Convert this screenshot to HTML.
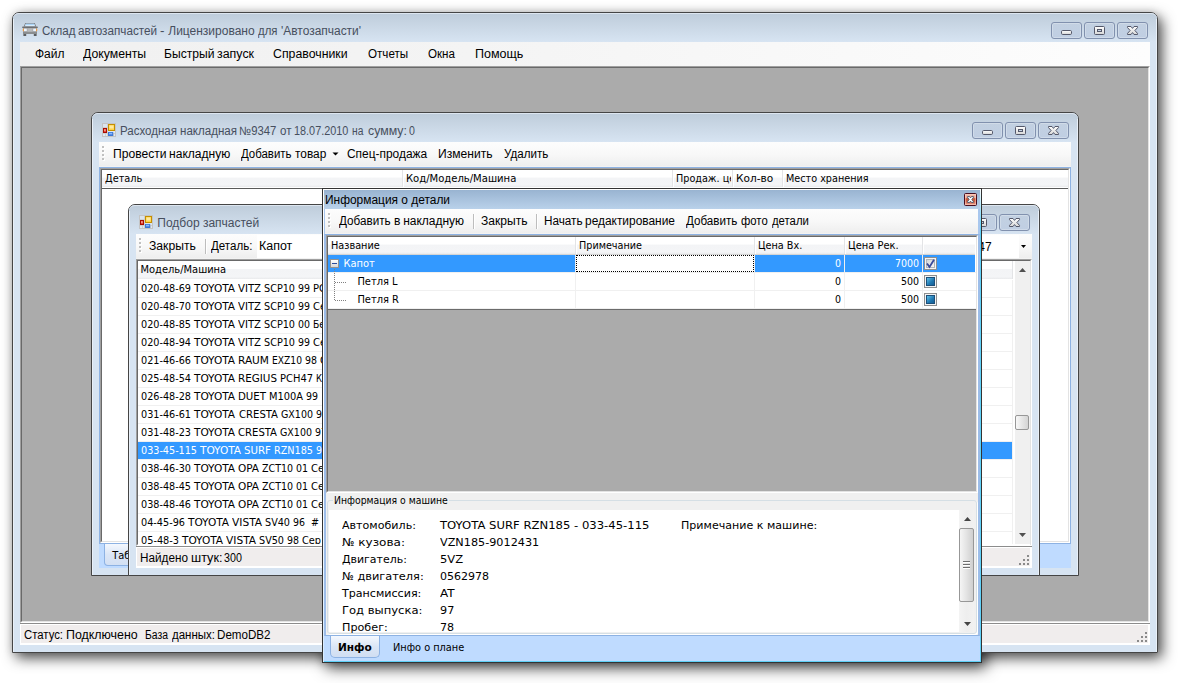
<!DOCTYPE html>
<html lang="ru"><head><meta charset="utf-8"><title>Склад автозапчастей</title>
<style>
html,body{margin:0;padding:0}
body{width:1178px;height:683px;background:#fff;position:relative;overflow:hidden}
div,span,svg{position:absolute;box-sizing:border-box}
span{white-space:pre;line-height:20px;height:20px}
</style></head>
<body>
<svg width="0" height="0" style="left:0;top:0"><defs><linearGradient id="gg" x1="0" y1="0" x2="0" y2="1"><stop offset="0" stop-color="#ffffff"/><stop offset="1" stop-color="#d6d6d6"/></linearGradient></defs></svg>
<div style="left:12px;top:12px;width:1146px;height:641px;border-radius:7px 7px 0 0;box-shadow:4px 5px 14px 0 rgba(0,0,0,.7), 0 0 8px rgba(0,0,0,.1);background:#fff;"></div>
<div style="left:322px;top:188px;width:660px;height:475px;box-shadow:4px 5px 14px 0 rgba(0,0,0,.7), 0 0 8px rgba(0,0,0,.1);background:#fff;"></div>
<div style="left:12px;top:12px;width:1146px;height:641px;background:#d7e4f2;border:1px solid #454545;border-radius:7px 7px 0 0;"></div>
<div style="left:13px;top:13px;width:1144px;height:29px;border-radius:6px 6px 0 0;background:linear-gradient(#bfcddb,#d7e4f2);border-top:1px solid #dde6f0;"></div>
<div style="left:13px;top:19px;width:1px;height:633px;background:#e9f0f8;"></div>
<div style="left:1156px;top:19px;width:1px;height:633px;background:#e9f0f8;"></div>
<div style="left:1117px;top:22px;width:31px;height:17px;border:1px solid #8191ae;border-radius:3px;background:linear-gradient(rgba(190,204,224,.5),rgba(178,194,218,.6));box-shadow:inset 0 0 0 1px rgba(255,255,255,.25);"></div>
<svg style="left:1117px;top:22px" width="31" height="17" viewBox="0 0 31 17"><path d="M10.5 4.5 L14 4.5 L15.5 6.4 L17 4.5 L20.5 4.5 L20.5 5.6 L17.9 8.5 L20.5 11.4 L20.5 12.5 L17 12.5 L15.5 10.6 L14 12.5 L10.5 12.5 L10.5 11.4 L13.1 8.5 L10.5 5.6 Z" fill="url(#gg)" stroke="#54586a" stroke-width="1" stroke-linejoin="round"/></svg>
<div style="left:1084px;top:22px;width:31px;height:17px;border:1px solid #8191ae;border-radius:3px;background:linear-gradient(rgba(190,204,224,.5),rgba(178,194,218,.6));box-shadow:inset 0 0 0 1px rgba(255,255,255,.25);"></div>
<svg style="left:1084px;top:22px" width="31" height="17" viewBox="0 0 31 17"><rect x="10.5" y="4.5" width="10" height="8" rx="1" fill="url(#gg)" stroke="#54586a" stroke-width="1"/><rect x="13.5" y="7.5" width="4" height="2" fill="#c3d1e3" stroke="#54586a" stroke-width="1"/></svg>
<div style="left:1051px;top:22px;width:31px;height:17px;border:1px solid #8191ae;border-radius:3px;background:linear-gradient(rgba(190,204,224,.5),rgba(178,194,218,.6));box-shadow:inset 0 0 0 1px rgba(255,255,255,.25);"></div>
<svg style="left:1051px;top:22px" width="31" height="17" viewBox="0 0 31 17"><rect x="10.5" y="8.5" width="10" height="4" rx="1.2" fill="url(#gg)" stroke="#54586a" stroke-width="1"/></svg>
<svg style="left:22px;top:22px" width="16" height="15" viewBox="0 0 16 15"><path d="M3.2 1 L12.8 1 L14.2 4.6 L1.8 4.6 Z" fill="#77797c"/><path d="M3.8 1.8 L12.2 1.8 L13.2 4.3 L2.8 4.3 Z" fill="#d9edfd"/><path d="M3.8 1.8 L12.2 1.8 L12.6 2.9 L3.4 2.9 Z" fill="#a9d3f6"/><rect x="0.2" y="4.5" width="15.6" height="1.6" rx=".6" fill="#6e6f71"/><rect x="1" y="6" width="14" height="4.2" fill="#9a9c9e"/><rect x="5.3" y="6.3" width="5.4" height="3.4" fill="#b9bbbd"/><rect x="1.8" y="6.6" width="3" height="2.6" fill="#eef6ff"/><rect x="11.2" y="6.6" width="3" height="2.6" fill="#eef6ff"/><rect x="0.8" y="6.6" width="1.1" height="2.6" fill="#f59a3c"/><rect x="14.1" y="6.6" width="1.1" height="2.6" fill="#f59a3c"/><rect x="1" y="10" width="14" height="2" fill="#8b8d8f"/><rect x="1.4" y="12" width="2.8" height="2" fill="#5b5d60"/><rect x="11.8" y="12" width="2.8" height="2" fill="#5b5d60"/></svg>
<span style="left:41.81px;top:21.00px;font:400 12px 'Liberation Sans',sans-serif;line-height:20px;color:#474f5e;transform:scaleX(0.9658);transform-origin:0 0;">Склад </span>
<span style="left:78.17px;top:21.00px;font:400 12px 'Liberation Sans',sans-serif;line-height:20px;color:#474f5e;transform:scaleX(0.9755);transform-origin:0 0;">автозапчастей </span>
<span style="left:160.30px;top:21.00px;font:400 12px 'Liberation Sans',sans-serif;line-height:20px;color:#474f5e;transform:scaleX(1.1178);transform-origin:0 0;">- </span>
<span style="left:168.26px;top:21.00px;font:400 12px 'Liberation Sans',sans-serif;line-height:20px;color:#474f5e;">Лицензировано </span>
<span style="left:257.90px;top:21.00px;font:400 12px 'Liberation Sans',sans-serif;line-height:20px;color:#474f5e;transform:scaleX(0.9476);transform-origin:0 0;">для </span>
<span style="left:280.59px;top:21.00px;font:400 12px 'Liberation Sans',sans-serif;line-height:20px;color:#474f5e;transform:scaleX(0.9955);transform-origin:0 0;">'Автозапчасти'</span>
<div style="left:20px;top:42px;width:1130px;height:24px;background:linear-gradient(to right,#f0f0f0,#f4f4f4 40%,#fdfdfd);"></div>
<span style="left:34.93px;top:44.00px;font:400 12px 'Liberation Sans',sans-serif;line-height:20px;color:#000;">Файл</span>
<span style="left:83.13px;top:44.00px;font:400 12px 'Liberation Sans',sans-serif;line-height:20px;color:#000;transform:scaleX(1.0205);transform-origin:0 0;">Документы</span>
<span style="left:273.18px;top:44.00px;font:400 12px 'Liberation Sans',sans-serif;line-height:20px;color:#000;transform:scaleX(1.0258);transform-origin:0 0;">Справочники</span>
<span style="left:367.67px;top:44.00px;font:400 12px 'Liberation Sans',sans-serif;line-height:20px;color:#000;transform:scaleX(0.9690);transform-origin:0 0;">Отчеты</span>
<span style="left:427.57px;top:44.00px;font:400 12px 'Liberation Sans',sans-serif;line-height:20px;color:#000;transform:scaleX(0.9680);transform-origin:0 0;">Окна</span>
<span style="left:474.56px;top:44.00px;font:400 12px 'Liberation Sans',sans-serif;line-height:20px;color:#000;transform:scaleX(1.0443);transform-origin:0 0;">Помощь</span>
<span style="left:164.39px;top:44.00px;font:400 12px 'Liberation Sans',sans-serif;line-height:20px;color:#000;transform:scaleX(1.0084);transform-origin:0 0;">Быстрый </span>
<span style="left:217.07px;top:44.00px;font:400 12px 'Liberation Sans',sans-serif;line-height:20px;color:#000;transform:scaleX(1.0350);transform-origin:0 0;">запуск</span>
<div style="left:20px;top:66px;width:1130px;height:557px;background:#ababab;border-style:solid;border-width:1px;border-color:#a0a0a0 #fff #fff #a0a0a0;"></div>
<div style="left:21px;top:67px;width:1128px;height:555px;background:#ababab;border-style:solid;border-width:1px;border-color:#696969 #e3e3e3 #e3e3e3 #696969;"></div>
<div style="left:20px;top:623px;width:1130px;height:22px;background:#f0eded;border-style:solid;border-color:#fff;border-width:1px 2px 2px 1px;"></div>
<div style="left:20px;top:623px;width:1130px;height:1px;background:#8c8c8c;"></div>
<div style="left:20px;top:624px;width:1130px;height:1px;background:#fff;"></div>
<span style="left:24.23px;top:625.00px;font:400 12px 'Liberation Sans',sans-serif;line-height:20px;color:#000;transform:scaleX(0.9453);transform-origin:0 0;">Статус: </span>
<span style="left:65.87px;top:625.00px;font:400 12px 'Liberation Sans',sans-serif;line-height:20px;color:#000;transform:scaleX(1.0337);transform-origin:0 0;">Подключено</span>
<span style="left:144.84px;top:625.00px;font:400 12px 'Liberation Sans',sans-serif;line-height:20px;color:#000;transform:scaleX(0.8630);transform-origin:0 0;">База </span>
<span style="left:172.00px;top:625.00px;font:400 12px 'Liberation Sans',sans-serif;line-height:20px;color:#000;transform:scaleX(0.9579);transform-origin:0 0;">данных: </span>
<span style="left:217.43px;top:625.00px;font:400 12px 'Liberation Sans',sans-serif;line-height:20px;color:#000;transform:scaleX(0.9673);transform-origin:0 0;">DemoDB2</span>
<div style="left:1145px;top:640px;width:2px;height:2px;background:#8a8a8a;"></div>
<div style="left:1141px;top:640px;width:2px;height:2px;background:#8a8a8a;"></div>
<div style="left:1137px;top:640px;width:2px;height:2px;background:#8a8a8a;"></div>
<div style="left:1145px;top:636px;width:2px;height:2px;background:#8a8a8a;"></div>
<div style="left:1141px;top:636px;width:2px;height:2px;background:#8a8a8a;"></div>
<div style="left:1145px;top:632px;width:2px;height:2px;background:#8a8a8a;"></div>
<div style="left:91px;top:112px;width:988px;height:464px;background:#d7e4f2;border:1px solid #454545;border-radius:7px 7px 0 0;"></div>
<div style="left:92px;top:113px;width:986px;height:29px;border-radius:6px 6px 0 0;background:linear-gradient(#bfcddb,#d7e4f2);border-top:1px solid #dde6f0;"></div>
<div style="left:92px;top:119px;width:1px;height:456px;background:#e9f0f8;"></div>
<div style="left:1077px;top:119px;width:1px;height:456px;background:#e9f0f8;"></div>
<div style="left:1038px;top:122px;width:31px;height:17px;border:1px solid #8191ae;border-radius:3px;background:linear-gradient(rgba(190,204,224,.5),rgba(178,194,218,.6));box-shadow:inset 0 0 0 1px rgba(255,255,255,.25);"></div>
<svg style="left:1038px;top:122px" width="31" height="17" viewBox="0 0 31 17"><path d="M10.5 4.5 L14 4.5 L15.5 6.4 L17 4.5 L20.5 4.5 L20.5 5.6 L17.9 8.5 L20.5 11.4 L20.5 12.5 L17 12.5 L15.5 10.6 L14 12.5 L10.5 12.5 L10.5 11.4 L13.1 8.5 L10.5 5.6 Z" fill="url(#gg)" stroke="#54586a" stroke-width="1" stroke-linejoin="round"/></svg>
<div style="left:1005px;top:122px;width:31px;height:17px;border:1px solid #8191ae;border-radius:3px;background:linear-gradient(rgba(190,204,224,.5),rgba(178,194,218,.6));box-shadow:inset 0 0 0 1px rgba(255,255,255,.25);"></div>
<svg style="left:1005px;top:122px" width="31" height="17" viewBox="0 0 31 17"><rect x="10.5" y="4.5" width="10" height="8" rx="1" fill="url(#gg)" stroke="#54586a" stroke-width="1"/><rect x="13.5" y="7.5" width="4" height="2" fill="#c3d1e3" stroke="#54586a" stroke-width="1"/></svg>
<div style="left:972px;top:122px;width:31px;height:17px;border:1px solid #8191ae;border-radius:3px;background:linear-gradient(rgba(190,204,224,.5),rgba(178,194,218,.6));box-shadow:inset 0 0 0 1px rgba(255,255,255,.25);"></div>
<svg style="left:972px;top:122px" width="31" height="17" viewBox="0 0 31 17"><rect x="10.5" y="8.5" width="10" height="4" rx="1.2" fill="url(#gg)" stroke="#54586a" stroke-width="1"/></svg>
<svg style="left:102px;top:123px" width="14" height="14" viewBox="0 0 14 14"><rect x="0.5" y="0.5" width="13" height="13" fill="#e9eef5" fill-opacity=".55" stroke="#c4c4c4" stroke-width="1"/><path d="M5.5 1 V13 M1 4.5 H5.5 M1 10.5 H13 M11.5 10.5 V13 M3.5 10.5 V13" stroke="#c9c9c9" stroke-width="1" fill="none" opacity=".8"/><rect x="6.5" y="1.5" width="6" height="6" fill="#ffd348" stroke="#c48f00" stroke-width="1"/><rect x="7.5" y="2.5" width="4" height="3" fill="#ffeaa0"/><rect x="1.5" y="5.5" width="3" height="4" fill="#e8483a" stroke="#a80c00" stroke-width="1"/><rect x="2.2" y="6.2" width="1.4" height="1.8" fill="#f9a79c"/><rect x="6" y="9" width="5.2" height="4" fill="#3b77d6"/><rect x="7" y="9.8" width="3.2" height="1.6" fill="#8db8ff"/></svg>
<span style="left:120.44px;top:121.00px;font:400 12px 'Liberation Sans',sans-serif;line-height:20px;color:#474f5e;transform:scaleX(0.9604);transform-origin:0 0;">Расходная </span>
<span style="left:179.77px;top:121.00px;font:400 12px 'Liberation Sans',sans-serif;line-height:20px;color:#474f5e;transform:scaleX(0.9634);transform-origin:0 0;">накладная </span>
<span style="left:239.19px;top:121.00px;font:400 12px 'Liberation Sans',sans-serif;line-height:20px;color:#474f5e;transform:scaleX(0.9430);transform-origin:0 0;">№9347 </span>
<span style="left:280.41px;top:121.00px;font:400 12px 'Liberation Sans',sans-serif;line-height:20px;color:#474f5e;transform:scaleX(0.9647);transform-origin:0 0;">от </span>
<span style="left:294.35px;top:121.00px;font:400 12px 'Liberation Sans',sans-serif;line-height:20px;color:#474f5e;transform:scaleX(0.9056);transform-origin:0 0;">18.07.2010 </span>
<span style="left:352.25px;top:121.00px;font:400 12px 'Liberation Sans',sans-serif;line-height:20px;color:#474f5e;transform:scaleX(0.8547);transform-origin:0 0;">на </span>
<span style="left:367.97px;top:121.00px;font:400 12px 'Liberation Sans',sans-serif;line-height:20px;color:#474f5e;transform:scaleX(1.0268);transform-origin:0 0;">сумму: </span>
<span style="left:409.49px;top:121.00px;font:400 12px 'Liberation Sans',sans-serif;line-height:20px;color:#474f5e;transform:scaleX(0.8851);transform-origin:0 0;">0</span>
<div style="left:99px;top:142px;width:972px;height:25px;background:linear-gradient(#fdfdfd,#f8f8f8 50%,#eeeeee 96%,#f6f6f6);"></div>
<div style="left:102px;top:146px;width:2px;height:2px;background:#c5c5c5;"></div>
<div style="left:103px;top:147px;width:2px;height:2px;background:#fff;"></div>
<div style="left:102px;top:146px;width:2px;height:2px;background:#c0c0c0;"></div>
<div style="left:102px;top:150px;width:2px;height:2px;background:#c5c5c5;"></div>
<div style="left:103px;top:151px;width:2px;height:2px;background:#fff;"></div>
<div style="left:102px;top:150px;width:2px;height:2px;background:#c0c0c0;"></div>
<div style="left:102px;top:154px;width:2px;height:2px;background:#c5c5c5;"></div>
<div style="left:103px;top:155px;width:2px;height:2px;background:#fff;"></div>
<div style="left:102px;top:154px;width:2px;height:2px;background:#c0c0c0;"></div>
<div style="left:102px;top:158px;width:2px;height:2px;background:#c5c5c5;"></div>
<div style="left:103px;top:159px;width:2px;height:2px;background:#fff;"></div>
<div style="left:102px;top:158px;width:2px;height:2px;background:#c0c0c0;"></div>
<span style="left:112.69px;top:144.00px;font:400 12px 'Liberation Sans',sans-serif;line-height:20px;color:#000;transform:scaleX(1.0093);transform-origin:0 0;">Провести </span>
<span style="left:168.63px;top:144.00px;font:400 12px 'Liberation Sans',sans-serif;line-height:20px;color:#000;transform:scaleX(1.0058);transform-origin:0 0;">накладную</span>
<span style="left:241.03px;top:144.00px;font:400 12px 'Liberation Sans',sans-serif;line-height:20px;color:#000;transform:scaleX(0.9522);transform-origin:0 0;">Добавить </span>
<span style="left:295.42px;top:144.00px;font:400 12px 'Liberation Sans',sans-serif;line-height:20px;color:#000;transform:scaleX(0.9892);transform-origin:0 0;">товар</span>
<span style="left:347.00px;top:144.00px;font:400 12px 'Liberation Sans',sans-serif;line-height:20px;color:#000;transform:scaleX(0.9937);transform-origin:0 0;">Спец-продажа</span>
<span style="left:438.49px;top:144.00px;font:400 12px 'Liberation Sans',sans-serif;line-height:20px;color:#000;transform:scaleX(1.0073);transform-origin:0 0;">Изменить</span>
<span style="left:503.64px;top:144.00px;font:400 12px 'Liberation Sans',sans-serif;line-height:20px;color:#000;transform:scaleX(0.9667);transform-origin:0 0;">Удалить</span>
<svg style="left:332px;top:152px" width="7" height="4" viewBox="0 0 7 4"><path d="M0.5 0.5 L6.5 0.5 L3.5 3.5 Z" fill="#000"/></svg>
<div style="left:99px;top:167px;width:972px;height:401px;background:#bfdbff;"></div>
<div style="left:99px;top:167px;width:972px;height:377px;background:#fff;border:1px solid #8db2e3;"></div>
<div style="left:100px;top:168px;width:970px;height:375px;background:#fff;border-style:solid;border-width:1px;border-color:#a0a0a0 #fff #fff #a0a0a0;"></div>
<div style="left:101px;top:169px;width:968px;height:373px;background:#fff;border-style:solid;border-width:1px;border-color:#696969 #e3e3e3 #e3e3e3 #696969;"></div>
<div style="left:102px;top:170px;width:966px;height:17px;background:linear-gradient(#fff,#fff 42%,#f3f4f6 47%,#f4f5f7 88%,#e9eaec);"></div>
<div style="left:402px;top:170px;width:1px;height:17px;background:#e3e4e6;"></div>
<div style="left:403px;top:170px;width:1px;height:17px;background:#fff;"></div>
<div style="left:672px;top:170px;width:1px;height:17px;background:#e3e4e6;"></div>
<div style="left:673px;top:170px;width:1px;height:17px;background:#fff;"></div>
<div style="left:732px;top:170px;width:1px;height:17px;background:#e3e4e6;"></div>
<div style="left:733px;top:170px;width:1px;height:17px;background:#fff;"></div>
<div style="left:782px;top:170px;width:1px;height:17px;background:#e3e4e6;"></div>
<div style="left:783px;top:170px;width:1px;height:17px;background:#fff;"></div>
<div style="left:102px;top:188px;width:966px;height:1px;background:#5a5a5a;"></div>
<span style="left:104.97px;top:169.00px;font:400 11px 'DejaVu Sans Condensed','Liberation Sans',sans-serif;line-height:20px;color:#000;transform:scaleX(0.9863);transform-origin:0 0;">Деталь</span>
<span style="left:406.19px;top:169.00px;font:400 11px 'DejaVu Sans Condensed','Liberation Sans',sans-serif;line-height:20px;color:#000;transform:scaleX(1.0125);transform-origin:0 0;">Код/Модель/Машина</span>
<div style="left:674px;top:169.00px;width:57px;height:20px;overflow:hidden"><span style="left:1.73px;top:0.00px;font:400 11px 'DejaVu Sans Condensed','Liberation Sans',sans-serif;line-height:20px;color:#000;transform:scaleX(0.9750);transform-origin:0 0;">Продаж. це</span></div>
<span style="left:735.74px;top:169.00px;font:400 11px 'DejaVu Sans Condensed','Liberation Sans',sans-serif;line-height:20px;color:#000;transform:scaleX(1.0638);transform-origin:0 0;">Кол-во</span>
<span style="left:786.33px;top:169.00px;font:400 11px 'DejaVu Sans Condensed','Liberation Sans',sans-serif;line-height:20px;color:#000;transform:scaleX(0.9748);transform-origin:0 0;">Место хранения</span>
<div style="left:104px;top:544px;width:66px;height:22px;background:linear-gradient(#f4f8fe,#dbe6f6 50%,#d3e0f3);border:1px solid #8db2e3;border-top:none;border-radius:0 0 4px 4px;"></div>
<span style="left:112.20px;top:546.00px;font:400 11px 'DejaVu Sans Condensed','Liberation Sans',sans-serif;line-height:20px;color:#000;">Таб</span>
<div style="left:128px;top:204px;width:912px;height:372px;background:#d7e4f2;border:1px solid #454545;border-radius:7px 7px 0 0;"></div>
<div style="left:129px;top:205px;width:910px;height:29px;border-radius:6px 6px 0 0;background:linear-gradient(#bfcddb,#d7e4f2);border-top:1px solid #dde6f0;"></div>
<div style="left:129px;top:211px;width:1px;height:364px;background:#e9f0f8;"></div>
<div style="left:1038px;top:211px;width:1px;height:364px;background:#e9f0f8;"></div>
<div style="left:999px;top:214px;width:31px;height:17px;border:1px solid #8191ae;border-radius:3px;background:linear-gradient(rgba(190,204,224,.5),rgba(178,194,218,.6));box-shadow:inset 0 0 0 1px rgba(255,255,255,.25);"></div>
<svg style="left:999px;top:214px" width="31" height="17" viewBox="0 0 31 17"><path d="M10.5 4.5 L14 4.5 L15.5 6.4 L17 4.5 L20.5 4.5 L20.5 5.6 L17.9 8.5 L20.5 11.4 L20.5 12.5 L17 12.5 L15.5 10.6 L14 12.5 L10.5 12.5 L10.5 11.4 L13.1 8.5 L10.5 5.6 Z" fill="url(#gg)" stroke="#54586a" stroke-width="1" stroke-linejoin="round"/></svg>
<div style="left:966px;top:214px;width:31px;height:17px;border:1px solid #8191ae;border-radius:3px;background:linear-gradient(rgba(190,204,224,.5),rgba(178,194,218,.6));box-shadow:inset 0 0 0 1px rgba(255,255,255,.25);"></div>
<svg style="left:966px;top:214px" width="31" height="17" viewBox="0 0 31 17"><rect x="10.5" y="4.5" width="10" height="8" rx="1" fill="url(#gg)" stroke="#54586a" stroke-width="1"/><rect x="13.5" y="7.5" width="4" height="2" fill="#c3d1e3" stroke="#54586a" stroke-width="1"/></svg>
<div style="left:933px;top:214px;width:31px;height:17px;border:1px solid #8191ae;border-radius:3px;background:linear-gradient(rgba(190,204,224,.5),rgba(178,194,218,.6));box-shadow:inset 0 0 0 1px rgba(255,255,255,.25);"></div>
<svg style="left:933px;top:214px" width="31" height="17" viewBox="0 0 31 17"><rect x="10.5" y="8.5" width="10" height="4" rx="1.2" fill="url(#gg)" stroke="#54586a" stroke-width="1"/></svg>
<svg style="left:139px;top:215px" width="14" height="14" viewBox="0 0 14 14"><rect x="0.5" y="0.5" width="13" height="13" fill="#e9eef5" fill-opacity=".55" stroke="#c4c4c4" stroke-width="1"/><path d="M5.5 1 V13 M1 4.5 H5.5 M1 10.5 H13 M11.5 10.5 V13 M3.5 10.5 V13" stroke="#c9c9c9" stroke-width="1" fill="none" opacity=".8"/><rect x="6.5" y="1.5" width="6" height="6" fill="#ffd348" stroke="#c48f00" stroke-width="1"/><rect x="7.5" y="2.5" width="4" height="3" fill="#ffeaa0"/><rect x="1.5" y="5.5" width="3" height="4" fill="#e8483a" stroke="#a80c00" stroke-width="1"/><rect x="2.2" y="6.2" width="1.4" height="1.8" fill="#f9a79c"/><rect x="6" y="9" width="5.2" height="4" fill="#3b77d6"/><rect x="7" y="9.8" width="3.2" height="1.6" fill="#8db8ff"/></svg>
<span style="left:157.30px;top:213.00px;font:400 12px 'Liberation Sans',sans-serif;line-height:20px;color:#474f5e;">Подбор запчастей</span>
<div style="left:136px;top:234px;width:896px;height:25px;background:linear-gradient(#fdfdfd,#f8f8f8 50%,#eeeeee 96%,#f6f6f6);"></div>
<div style="left:139px;top:238px;width:2px;height:2px;background:#c5c5c5;"></div>
<div style="left:140px;top:239px;width:2px;height:2px;background:#fff;"></div>
<div style="left:139px;top:238px;width:2px;height:2px;background:#c0c0c0;"></div>
<div style="left:139px;top:242px;width:2px;height:2px;background:#c5c5c5;"></div>
<div style="left:140px;top:243px;width:2px;height:2px;background:#fff;"></div>
<div style="left:139px;top:242px;width:2px;height:2px;background:#c0c0c0;"></div>
<div style="left:139px;top:246px;width:2px;height:2px;background:#c5c5c5;"></div>
<div style="left:140px;top:247px;width:2px;height:2px;background:#fff;"></div>
<div style="left:139px;top:246px;width:2px;height:2px;background:#c0c0c0;"></div>
<div style="left:139px;top:250px;width:2px;height:2px;background:#c5c5c5;"></div>
<div style="left:140px;top:251px;width:2px;height:2px;background:#fff;"></div>
<div style="left:139px;top:250px;width:2px;height:2px;background:#c0c0c0;"></div>
<span style="left:149.25px;top:236.00px;font:400 12px 'Liberation Sans',sans-serif;line-height:20px;color:#000;transform:scaleX(1.0138);transform-origin:0 0;">Закрыть</span>
<div style="left:205px;top:239px;width:1px;height:15px;background:#bdbdbd;"></div>
<div style="left:206px;top:239px;width:1px;height:15px;background:#fff;"></div>
<span style="left:210.93px;top:236.00px;font:400 12px 'Liberation Sans',sans-serif;line-height:20px;color:#000;transform:scaleX(0.9618);transform-origin:0 0;">Деталь:</span>
<div style="left:257px;top:235px;width:762px;height:23px;background:#fff;"></div>
<span style="left:259.16px;top:236.00px;font:400 12px 'Liberation Sans',sans-serif;line-height:20px;color:#000;transform:scaleX(1.0356);transform-origin:0 0;">Капот</span>
<span style="left:978.33px;top:237.00px;font:400 12px 'Liberation Sans',sans-serif;line-height:20px;color:#000;">47</span>
<svg style="left:1021px;top:245px" width="5" height="3" viewBox="0 0 5 3"><path d="M0 0 L5 0 L2.5 3 Z" fill="#000"/></svg>
<div style="left:136px;top:259px;width:896px;height:287px;background:#fff;border-style:solid;border-width:1px;border-color:#a0a0a0 #fff #fff #a0a0a0;"></div>
<div style="left:137px;top:260px;width:894px;height:285px;background:#fff;border-style:solid;border-width:1px;border-color:#696969 #e3e3e3 #e3e3e3 #696969;"></div>
<div style="left:138px;top:261px;width:875px;height:18px;background:linear-gradient(#fff,#fff 42%,#f3f4f6 47%,#f4f5f7 88%,#e9eaec);border-right:1px solid #e3e4e6;"></div>
<span style="left:140.50px;top:259.50px;font:400 11px 'DejaVu Sans Condensed','Liberation Sans',sans-serif;line-height:20px;color:#000;">Модель/Машина</span>
<div style="left:138px;top:280px;width:875px;height:18px;background:#fff;border-bottom:1px solid #f0f0f0;border-right:1px solid #f0f0f0;"></div>
<span style="left:141.00px;top:279.00px;font:400 11px 'DejaVu Sans Condensed','Liberation Sans',sans-serif;line-height:20px;color:#000;transform:scaleX(0.9764);transform-origin:0 0;">020-48-69 </span>
<span style="left:194.00px;top:279.00px;font:400 11px 'DejaVu Sans Condensed','Liberation Sans',sans-serif;line-height:20px;color:#000;transform:scaleX(1.0673);transform-origin:0 0;">TOYOTA </span>
<span style="left:238.00px;top:279.00px;font:400 11px 'DejaVu Sans Condensed','Liberation Sans',sans-serif;line-height:20px;color:#000;transform:scaleX(1.0220);transform-origin:0 0;">VITZ </span>
<span style="left:264.00px;top:279.00px;font:400 11px 'DejaVu Sans Condensed','Liberation Sans',sans-serif;line-height:20px;color:#000;transform:scaleX(0.9763);transform-origin:0 0;">SCP10 </span>
<span style="left:298.00px;top:279.00px;font:400 11px 'DejaVu Sans Condensed','Liberation Sans',sans-serif;line-height:20px;color:#000;transform:scaleX(0.9531);transform-origin:0 0;">99 </span>
<span style="left:313.00px;top:279.00px;font:400 11px 'DejaVu Sans Condensed','Liberation Sans',sans-serif;line-height:20px;color:#000;transform:scaleX(1.0093);transform-origin:0 0;">РС</span>
<div style="left:138px;top:298px;width:875px;height:18px;background:#fff;border-bottom:1px solid #f0f0f0;border-right:1px solid #f0f0f0;"></div>
<span style="left:141.00px;top:297.00px;font:400 11px 'DejaVu Sans Condensed','Liberation Sans',sans-serif;line-height:20px;color:#000;transform:scaleX(0.9764);transform-origin:0 0;">020-48-70 </span>
<span style="left:194.00px;top:297.00px;font:400 11px 'DejaVu Sans Condensed','Liberation Sans',sans-serif;line-height:20px;color:#000;transform:scaleX(1.0673);transform-origin:0 0;">TOYOTA </span>
<span style="left:238.00px;top:297.00px;font:400 11px 'DejaVu Sans Condensed','Liberation Sans',sans-serif;line-height:20px;color:#000;transform:scaleX(1.0220);transform-origin:0 0;">VITZ </span>
<span style="left:264.00px;top:297.00px;font:400 11px 'DejaVu Sans Condensed','Liberation Sans',sans-serif;line-height:20px;color:#000;transform:scaleX(0.9763);transform-origin:0 0;">SCP10 </span>
<span style="left:298.00px;top:297.00px;font:400 11px 'DejaVu Sans Condensed','Liberation Sans',sans-serif;line-height:20px;color:#000;transform:scaleX(0.9531);transform-origin:0 0;">99 </span>
<span style="left:313.00px;top:297.00px;font:400 11px 'DejaVu Sans Condensed','Liberation Sans',sans-serif;line-height:20px;color:#000;">Се</span>
<div style="left:138px;top:316px;width:875px;height:18px;background:#fff;border-bottom:1px solid #f0f0f0;border-right:1px solid #f0f0f0;"></div>
<span style="left:141.00px;top:315.00px;font:400 11px 'DejaVu Sans Condensed','Liberation Sans',sans-serif;line-height:20px;color:#000;transform:scaleX(0.9764);transform-origin:0 0;">020-48-85 </span>
<span style="left:194.00px;top:315.00px;font:400 11px 'DejaVu Sans Condensed','Liberation Sans',sans-serif;line-height:20px;color:#000;transform:scaleX(1.0673);transform-origin:0 0;">TOYOTA </span>
<span style="left:238.00px;top:315.00px;font:400 11px 'DejaVu Sans Condensed','Liberation Sans',sans-serif;line-height:20px;color:#000;transform:scaleX(1.0220);transform-origin:0 0;">VITZ </span>
<span style="left:264.00px;top:315.00px;font:400 11px 'DejaVu Sans Condensed','Liberation Sans',sans-serif;line-height:20px;color:#000;transform:scaleX(0.9763);transform-origin:0 0;">SCP10 </span>
<span style="left:298.00px;top:315.00px;font:400 11px 'DejaVu Sans Condensed','Liberation Sans',sans-serif;line-height:20px;color:#000;transform:scaleX(0.9531);transform-origin:0 0;">00 </span>
<span style="left:313.00px;top:315.00px;font:400 11px 'DejaVu Sans Condensed','Liberation Sans',sans-serif;line-height:20px;color:#000;transform:scaleX(0.9317);transform-origin:0 0;">Бе</span>
<div style="left:138px;top:334px;width:875px;height:18px;background:#fff;border-bottom:1px solid #f0f0f0;border-right:1px solid #f0f0f0;"></div>
<span style="left:141.00px;top:333.00px;font:400 11px 'DejaVu Sans Condensed','Liberation Sans',sans-serif;line-height:20px;color:#000;transform:scaleX(0.9764);transform-origin:0 0;">020-48-94 </span>
<span style="left:194.00px;top:333.00px;font:400 11px 'DejaVu Sans Condensed','Liberation Sans',sans-serif;line-height:20px;color:#000;transform:scaleX(1.0673);transform-origin:0 0;">TOYOTA </span>
<span style="left:238.00px;top:333.00px;font:400 11px 'DejaVu Sans Condensed','Liberation Sans',sans-serif;line-height:20px;color:#000;transform:scaleX(1.0220);transform-origin:0 0;">VITZ </span>
<span style="left:264.00px;top:333.00px;font:400 11px 'DejaVu Sans Condensed','Liberation Sans',sans-serif;line-height:20px;color:#000;transform:scaleX(0.9763);transform-origin:0 0;">SCP10 </span>
<span style="left:298.00px;top:333.00px;font:400 11px 'DejaVu Sans Condensed','Liberation Sans',sans-serif;line-height:20px;color:#000;transform:scaleX(0.9531);transform-origin:0 0;">99 </span>
<span style="left:313.00px;top:333.00px;font:400 11px 'DejaVu Sans Condensed','Liberation Sans',sans-serif;line-height:20px;color:#000;">Се</span>
<div style="left:138px;top:352px;width:875px;height:18px;background:#fff;border-bottom:1px solid #f0f0f0;border-right:1px solid #f0f0f0;"></div>
<span style="left:141.00px;top:351.00px;font:400 11px 'DejaVu Sans Condensed','Liberation Sans',sans-serif;line-height:20px;color:#000;transform:scaleX(0.9764);transform-origin:0 0;">021-46-66 </span>
<span style="left:194.00px;top:351.00px;font:400 11px 'DejaVu Sans Condensed','Liberation Sans',sans-serif;line-height:20px;color:#000;transform:scaleX(1.0673);transform-origin:0 0;">TOYOTA </span>
<span style="left:238.00px;top:351.00px;font:400 11px 'DejaVu Sans Condensed','Liberation Sans',sans-serif;line-height:20px;color:#000;transform:scaleX(1.0696);transform-origin:0 0;">RAUM </span>
<span style="left:272.00px;top:351.00px;font:400 11px 'DejaVu Sans Condensed','Liberation Sans',sans-serif;line-height:20px;color:#000;transform:scaleX(0.9260);transform-origin:0 0;">EXZ10 </span>
<span style="left:305.00px;top:351.00px;font:400 11px 'DejaVu Sans Condensed','Liberation Sans',sans-serif;line-height:20px;color:#000;transform:scaleX(0.9531);transform-origin:0 0;">98 </span>
<span style="left:320.00px;top:351.00px;font:400 11px 'DejaVu Sans Condensed','Liberation Sans',sans-serif;line-height:20px;color:#000;transform:scaleX(1.0126);transform-origin:0 0;">С</span>
<div style="left:138px;top:370px;width:875px;height:18px;background:#fff;border-bottom:1px solid #f0f0f0;border-right:1px solid #f0f0f0;"></div>
<span style="left:141.00px;top:369.00px;font:400 11px 'DejaVu Sans Condensed','Liberation Sans',sans-serif;line-height:20px;color:#000;transform:scaleX(0.9764);transform-origin:0 0;">025-48-54 </span>
<span style="left:194.00px;top:369.00px;font:400 11px 'DejaVu Sans Condensed','Liberation Sans',sans-serif;line-height:20px;color:#000;transform:scaleX(1.0673);transform-origin:0 0;">TOYOTA </span>
<span style="left:238.00px;top:369.00px;font:400 11px 'DejaVu Sans Condensed','Liberation Sans',sans-serif;line-height:20px;color:#000;transform:scaleX(1.0472);transform-origin:0 0;">REGIUS </span>
<span style="left:280.00px;top:369.00px;font:400 11px 'DejaVu Sans Condensed','Liberation Sans',sans-serif;line-height:20px;color:#000;transform:scaleX(1.0026);transform-origin:0 0;">PCH47 </span>
<span style="left:316.00px;top:369.00px;font:400 11px 'DejaVu Sans Condensed','Liberation Sans',sans-serif;line-height:20px;color:#000;transform:scaleX(0.8540);transform-origin:0 0;">К</span>
<div style="left:138px;top:388px;width:875px;height:18px;background:#fff;border-bottom:1px solid #f0f0f0;border-right:1px solid #f0f0f0;"></div>
<span style="left:141.00px;top:387.00px;font:400 11px 'DejaVu Sans Condensed','Liberation Sans',sans-serif;line-height:20px;color:#000;transform:scaleX(0.9764);transform-origin:0 0;">026-48-28 </span>
<span style="left:194.00px;top:387.00px;font:400 11px 'DejaVu Sans Condensed','Liberation Sans',sans-serif;line-height:20px;color:#000;transform:scaleX(1.0673);transform-origin:0 0;">TOYOTA </span>
<span style="left:238.00px;top:387.00px;font:400 11px 'DejaVu Sans Condensed','Liberation Sans',sans-serif;line-height:20px;color:#000;transform:scaleX(1.0309);transform-origin:0 0;">DUET </span>
<span style="left:269.00px;top:387.00px;font:400 11px 'DejaVu Sans Condensed','Liberation Sans',sans-serif;line-height:20px;color:#000;transform:scaleX(0.9944);transform-origin:0 0;">M100A </span>
<span style="left:306.00px;top:387.00px;font:400 11px 'DejaVu Sans Condensed','Liberation Sans',sans-serif;line-height:20px;color:#000;transform:scaleX(0.9531);transform-origin:0 0;">99 </span>
<div style="left:138px;top:406px;width:875px;height:18px;background:#fff;border-bottom:1px solid #f0f0f0;border-right:1px solid #f0f0f0;"></div>
<span style="left:141.00px;top:405.00px;font:400 11px 'DejaVu Sans Condensed','Liberation Sans',sans-serif;line-height:20px;color:#000;transform:scaleX(0.9764);transform-origin:0 0;">031-46-61 </span>
<span style="left:194.00px;top:405.00px;font:400 11px 'DejaVu Sans Condensed','Liberation Sans',sans-serif;line-height:20px;color:#000;transform:scaleX(1.0673);transform-origin:0 0;">TOYOTA  </span>
<span style="left:239.30px;top:405.00px;font:400 11px 'DejaVu Sans Condensed','Liberation Sans',sans-serif;line-height:20px;color:#000;transform:scaleX(1.0188);transform-origin:0 0;">CRESTA </span>
<span style="left:281.30px;top:405.00px;font:400 11px 'DejaVu Sans Condensed','Liberation Sans',sans-serif;line-height:20px;color:#000;transform:scaleX(0.9600);transform-origin:0 0;">GX100 </span>
<span style="left:316.30px;top:405.00px;font:400 11px 'DejaVu Sans Condensed','Liberation Sans',sans-serif;line-height:20px;color:#000;transform:scaleX(0.9531);transform-origin:0 0;">9</span>
<div style="left:138px;top:424px;width:875px;height:18px;background:#fff;border-bottom:1px solid #f0f0f0;border-right:1px solid #f0f0f0;"></div>
<span style="left:141.00px;top:423.00px;font:400 11px 'DejaVu Sans Condensed','Liberation Sans',sans-serif;line-height:20px;color:#000;transform:scaleX(0.9764);transform-origin:0 0;">031-48-23 </span>
<span style="left:194.00px;top:423.00px;font:400 11px 'DejaVu Sans Condensed','Liberation Sans',sans-serif;line-height:20px;color:#000;transform:scaleX(1.0673);transform-origin:0 0;">TOYOTA </span>
<span style="left:238.00px;top:423.00px;font:400 11px 'DejaVu Sans Condensed','Liberation Sans',sans-serif;line-height:20px;color:#000;transform:scaleX(1.0188);transform-origin:0 0;">CRESTA </span>
<span style="left:280.00px;top:423.00px;font:400 11px 'DejaVu Sans Condensed','Liberation Sans',sans-serif;line-height:20px;color:#000;transform:scaleX(0.9600);transform-origin:0 0;">GX100 </span>
<span style="left:315.00px;top:423.00px;font:400 11px 'DejaVu Sans Condensed','Liberation Sans',sans-serif;line-height:20px;color:#000;transform:scaleX(0.9531);transform-origin:0 0;">97</span>
<div style="left:138px;top:442px;width:875px;height:18px;background:#3399ff;border-bottom:1px solid #f0f0f0;border-right:1px solid #f0f0f0;"></div>
<span style="left:141.00px;top:441.00px;font:400 11px 'DejaVu Sans Condensed','Liberation Sans',sans-serif;line-height:20px;color:#fff;transform:scaleX(0.9739);transform-origin:0 0;">033-45-115 </span>
<span style="left:200.00px;top:441.00px;font:400 11px 'DejaVu Sans Condensed','Liberation Sans',sans-serif;line-height:20px;color:#fff;transform:scaleX(1.0673);transform-origin:0 0;">TOYOTA </span>
<span style="left:244.00px;top:441.00px;font:400 11px 'DejaVu Sans Condensed','Liberation Sans',sans-serif;line-height:20px;color:#fff;transform:scaleX(1.0346);transform-origin:0 0;">SURF </span>
<span style="left:274.00px;top:441.00px;font:400 11px 'DejaVu Sans Condensed','Liberation Sans',sans-serif;line-height:20px;color:#fff;transform:scaleX(0.9765);transform-origin:0 0;">RZN185 </span>
<span style="left:316.00px;top:441.00px;font:400 11px 'DejaVu Sans Condensed','Liberation Sans',sans-serif;line-height:20px;color:#fff;transform:scaleX(0.9531);transform-origin:0 0;">9</span>
<div style="left:138px;top:460px;width:875px;height:18px;background:#fff;border-bottom:1px solid #f0f0f0;border-right:1px solid #f0f0f0;"></div>
<span style="left:141.00px;top:459.00px;font:400 11px 'DejaVu Sans Condensed','Liberation Sans',sans-serif;line-height:20px;color:#000;transform:scaleX(0.9764);transform-origin:0 0;">038-46-30 </span>
<span style="left:194.00px;top:459.00px;font:400 11px 'DejaVu Sans Condensed','Liberation Sans',sans-serif;line-height:20px;color:#000;transform:scaleX(1.0673);transform-origin:0 0;">TOYOTA </span>
<span style="left:238.00px;top:459.00px;font:400 11px 'DejaVu Sans Condensed','Liberation Sans',sans-serif;line-height:20px;color:#000;transform:scaleX(1.0596);transform-origin:0 0;">OPA </span>
<span style="left:262.00px;top:459.00px;font:400 11px 'DejaVu Sans Condensed','Liberation Sans',sans-serif;line-height:20px;color:#000;transform:scaleX(0.9591);transform-origin:0 0;">ZCT10 </span>
<span style="left:296.00px;top:459.00px;font:400 11px 'DejaVu Sans Condensed','Liberation Sans',sans-serif;line-height:20px;color:#000;transform:scaleX(0.9531);transform-origin:0 0;">01 </span>
<span style="left:311.00px;top:459.00px;font:400 11px 'DejaVu Sans Condensed','Liberation Sans',sans-serif;line-height:20px;color:#000;">Се</span>
<div style="left:138px;top:478px;width:875px;height:18px;background:#fff;border-bottom:1px solid #f0f0f0;border-right:1px solid #f0f0f0;"></div>
<span style="left:141.00px;top:477.00px;font:400 11px 'DejaVu Sans Condensed','Liberation Sans',sans-serif;line-height:20px;color:#000;transform:scaleX(0.9764);transform-origin:0 0;">038-48-45 </span>
<span style="left:194.00px;top:477.00px;font:400 11px 'DejaVu Sans Condensed','Liberation Sans',sans-serif;line-height:20px;color:#000;transform:scaleX(1.0673);transform-origin:0 0;">TOYOTA </span>
<span style="left:238.00px;top:477.00px;font:400 11px 'DejaVu Sans Condensed','Liberation Sans',sans-serif;line-height:20px;color:#000;transform:scaleX(1.0596);transform-origin:0 0;">OPA </span>
<span style="left:262.00px;top:477.00px;font:400 11px 'DejaVu Sans Condensed','Liberation Sans',sans-serif;line-height:20px;color:#000;transform:scaleX(0.9591);transform-origin:0 0;">ZCT10 </span>
<span style="left:296.00px;top:477.00px;font:400 11px 'DejaVu Sans Condensed','Liberation Sans',sans-serif;line-height:20px;color:#000;transform:scaleX(0.9531);transform-origin:0 0;">01 </span>
<span style="left:311.00px;top:477.00px;font:400 11px 'DejaVu Sans Condensed','Liberation Sans',sans-serif;line-height:20px;color:#000;">Се</span>
<div style="left:138px;top:496px;width:875px;height:18px;background:#fff;border-bottom:1px solid #f0f0f0;border-right:1px solid #f0f0f0;"></div>
<span style="left:141.00px;top:495.00px;font:400 11px 'DejaVu Sans Condensed','Liberation Sans',sans-serif;line-height:20px;color:#000;transform:scaleX(0.9764);transform-origin:0 0;">038-48-46 </span>
<span style="left:194.00px;top:495.00px;font:400 11px 'DejaVu Sans Condensed','Liberation Sans',sans-serif;line-height:20px;color:#000;transform:scaleX(1.0673);transform-origin:0 0;">TOYOTA </span>
<span style="left:238.00px;top:495.00px;font:400 11px 'DejaVu Sans Condensed','Liberation Sans',sans-serif;line-height:20px;color:#000;transform:scaleX(1.0596);transform-origin:0 0;">OPA </span>
<span style="left:262.00px;top:495.00px;font:400 11px 'DejaVu Sans Condensed','Liberation Sans',sans-serif;line-height:20px;color:#000;transform:scaleX(0.9591);transform-origin:0 0;">ZCT10 </span>
<span style="left:296.00px;top:495.00px;font:400 11px 'DejaVu Sans Condensed','Liberation Sans',sans-serif;line-height:20px;color:#000;transform:scaleX(0.9531);transform-origin:0 0;">01 </span>
<span style="left:311.00px;top:495.00px;font:400 11px 'DejaVu Sans Condensed','Liberation Sans',sans-serif;line-height:20px;color:#000;">Се</span>
<div style="left:138px;top:514px;width:875px;height:18px;background:#fff;border-bottom:1px solid #f0f0f0;border-right:1px solid #f0f0f0;"></div>
<span style="left:141.00px;top:513.00px;font:400 11px 'DejaVu Sans Condensed','Liberation Sans',sans-serif;line-height:20px;color:#000;transform:scaleX(0.9797);transform-origin:0 0;">04-45-96 </span>
<span style="left:188.00px;top:513.00px;font:400 11px 'DejaVu Sans Condensed','Liberation Sans',sans-serif;line-height:20px;color:#000;transform:scaleX(1.0673);transform-origin:0 0;">TOYOTA </span>
<span style="left:232.00px;top:513.00px;font:400 11px 'DejaVu Sans Condensed','Liberation Sans',sans-serif;line-height:20px;color:#000;transform:scaleX(1.0743);transform-origin:0 0;">VISTA </span>
<span style="left:265.00px;top:513.00px;font:400 11px 'DejaVu Sans Condensed','Liberation Sans',sans-serif;line-height:20px;color:#000;transform:scaleX(0.9750);transform-origin:0 0;">SV40 </span>
<span style="left:293.00px;top:513.00px;font:400 11px 'DejaVu Sans Condensed','Liberation Sans',sans-serif;line-height:20px;color:#000;transform:scaleX(0.9531);transform-origin:0 0;">96  </span>
<span style="left:311.00px;top:513.00px;font:400 11px 'DejaVu Sans Condensed','Liberation Sans',sans-serif;line-height:20px;color:#000;transform:scaleX(0.9647);transform-origin:0 0;">#</span>
<div style="left:138px;top:532px;width:875px;height:12px;background:#fff;border-right:1px solid #f0f0f0;"></div>
<span style="left:141.00px;top:531.00px;font:400 11px 'DejaVu Sans Condensed','Liberation Sans',sans-serif;line-height:20px;color:#000;transform:scaleX(0.9840);transform-origin:0 0;">05-48-3 </span>
<span style="left:182.00px;top:531.00px;font:400 11px 'DejaVu Sans Condensed','Liberation Sans',sans-serif;line-height:20px;color:#000;transform:scaleX(1.0673);transform-origin:0 0;">TOYOTA </span>
<span style="left:226.00px;top:531.00px;font:400 11px 'DejaVu Sans Condensed','Liberation Sans',sans-serif;line-height:20px;color:#000;transform:scaleX(1.0743);transform-origin:0 0;">VISTA </span>
<span style="left:259.00px;top:531.00px;font:400 11px 'DejaVu Sans Condensed','Liberation Sans',sans-serif;line-height:20px;color:#000;transform:scaleX(0.9750);transform-origin:0 0;">SV50 </span>
<span style="left:287.00px;top:531.00px;font:400 11px 'DejaVu Sans Condensed','Liberation Sans',sans-serif;line-height:20px;color:#000;transform:scaleX(0.9531);transform-origin:0 0;">98 </span>
<span style="left:302.00px;top:531.00px;font:400 11px 'DejaVu Sans Condensed','Liberation Sans',sans-serif;line-height:20px;color:#000;transform:scaleX(0.9851);transform-origin:0 0;">Сер</span>
<div style="left:138px;top:544px;width:892px;height:2px;background:#fff;"></div>
<div style="left:1015px;top:261px;width:15px;height:283px;background:#f0f0f0;"></div>
<svg style="left:1019px;top:268px" width="7" height="4" viewBox="0 0 7 4"><path d="M0 4 L3.5 0 L7 4 Z" fill="#505050"/></svg>
<svg style="left:1019px;top:533px" width="7" height="4" viewBox="0 0 7 4"><path d="M0 0 L7 0 L3.5 4 Z" fill="#505050"/></svg>
<div style="left:1015px;top:415px;width:14px;height:15px;background:linear-gradient(to right,#f8f8f8,#e6e6e6 50%,#d4d4d4);border:1px solid #979797;border-radius:2px;"></div>
<div style="left:136px;top:546px;width:896px;height:22px;background:#f0eded;border-style:solid;border-color:#fff;border-width:1px 2px 2px 1px;"></div>
<div style="left:136px;top:546px;width:896px;height:1px;background:#8c8c8c;"></div>
<div style="left:136px;top:547px;width:896px;height:1px;background:#fff;"></div>
<span style="left:139.82px;top:548.00px;font:400 12px 'Liberation Sans',sans-serif;line-height:20px;color:#000;transform:scaleX(0.9780);transform-origin:0 0;">Найдено </span>
<span style="left:190.90px;top:548.00px;font:400 12px 'Liberation Sans',sans-serif;line-height:20px;color:#000;transform:scaleX(1.0540);transform-origin:0 0;">штук: </span>
<span style="left:224.43px;top:548.00px;font:400 12px 'Liberation Sans',sans-serif;line-height:20px;color:#000;transform:scaleX(0.8930);transform-origin:0 0;">300</span>
<div style="left:1027px;top:563px;width:2px;height:2px;background:#8a8a8a;"></div>
<div style="left:1023px;top:563px;width:2px;height:2px;background:#8a8a8a;"></div>
<div style="left:1019px;top:563px;width:2px;height:2px;background:#8a8a8a;"></div>
<div style="left:1027px;top:559px;width:2px;height:2px;background:#8a8a8a;"></div>
<div style="left:1023px;top:559px;width:2px;height:2px;background:#8a8a8a;"></div>
<div style="left:1027px;top:555px;width:2px;height:2px;background:#8a8a8a;"></div>
<div style="left:322px;top:188px;width:660px;height:475px;background:#bfdbff;border:1px solid #333;"></div>
<div style="left:323px;top:189px;width:658px;height:473px;background:#fff;"></div>
<div style="left:980px;top:189px;width:1px;height:473px;background:linear-gradient(#fff,#c9f2ff 12px,#5fd0f7 40px);"></div>
<div style="left:323px;top:661px;width:658px;height:1px;background:#5fd0f7;"></div>
<div style="left:323px;top:189px;width:1px;height:473px;background:linear-gradient(#fff,#fff 60%,#d8ecff);"></div>
<div style="left:324px;top:190px;width:656px;height:19px;background:linear-gradient(#99b4d1,#b9d1ea);"></div>
<span style="left:324.51px;top:190.00px;font:400 12px 'Liberation Sans',sans-serif;line-height:20px;color:#000;transform:scaleX(0.9936);transform-origin:0 0;">Информация о детали</span>
<div style="left:964px;top:193px;width:13px;height:13px;border:1px solid #4a0e1e;border-radius:1.5px;background:linear-gradient(#f3b9a9,#e9a08b 38%,#c84f2b 42%,#d2654a 70%,#e9a28f);box-shadow:inset 0 0 0 1px rgba(255,215,205,.5);"></div>
<svg style="left:964px;top:193px" width="13" height="13" viewBox="0 0 13 13"><path d="M3.6 3.6 L5.6 3.6 L6.5 4.8 L7.4 3.6 L9.4 3.6 L9.4 4.6 L7.9 6.5 L9.4 8.4 L9.4 9.4 L7.4 9.4 L6.5 8.2 L5.6 9.4 L3.6 9.4 L3.6 8.4 L5.1 6.5 L3.6 4.6 Z" fill="#fff" stroke="#4a556a" stroke-width="1" stroke-linejoin="round"/></svg>
<div style="left:324px;top:209px;width:656px;height:25px;background:#a9c7ee;"></div>
<div style="left:325px;top:209px;width:653px;height:25px;background:linear-gradient(#fdfdfd,#f8f8f8 50%,#eeeeee 96%,#f6f6f6);"></div>
<div style="left:328px;top:213px;width:2px;height:2px;background:#c5c5c5;"></div>
<div style="left:329px;top:214px;width:2px;height:2px;background:#fff;"></div>
<div style="left:328px;top:213px;width:2px;height:2px;background:#c0c0c0;"></div>
<div style="left:328px;top:217px;width:2px;height:2px;background:#c5c5c5;"></div>
<div style="left:329px;top:218px;width:2px;height:2px;background:#fff;"></div>
<div style="left:328px;top:217px;width:2px;height:2px;background:#c0c0c0;"></div>
<div style="left:328px;top:221px;width:2px;height:2px;background:#c5c5c5;"></div>
<div style="left:329px;top:222px;width:2px;height:2px;background:#fff;"></div>
<div style="left:328px;top:221px;width:2px;height:2px;background:#c0c0c0;"></div>
<div style="left:328px;top:225px;width:2px;height:2px;background:#c5c5c5;"></div>
<div style="left:329px;top:226px;width:2px;height:2px;background:#fff;"></div>
<div style="left:328px;top:225px;width:2px;height:2px;background:#c0c0c0;"></div>
<span style="left:338.73px;top:211.00px;font:400 12px 'Liberation Sans',sans-serif;line-height:20px;color:#000;transform:scaleX(0.9750);transform-origin:0 0;">Добавить </span>
<span style="left:394.03px;top:211.00px;font:400 12px 'Liberation Sans',sans-serif;line-height:20px;color:#000;transform:scaleX(1.0062);transform-origin:0 0;">в </span>
<span style="left:403.14px;top:211.00px;font:400 12px 'Liberation Sans',sans-serif;line-height:20px;color:#000;">накладную</span>
<span style="left:480.76px;top:211.00px;font:400 12px 'Liberation Sans',sans-serif;line-height:20px;color:#000;transform:scaleX(1.0049);transform-origin:0 0;">Закрыть</span>
<span style="left:543.82px;top:211.00px;font:400 12px 'Liberation Sans',sans-serif;line-height:20px;color:#000;transform:scaleX(0.9774);transform-origin:0 0;">Начать </span>
<span style="left:585.47px;top:211.00px;font:400 12px 'Liberation Sans',sans-serif;line-height:20px;color:#000;transform:scaleX(0.9927);transform-origin:0 0;">редактирование</span>
<span style="left:686.03px;top:211.00px;font:400 12px 'Liberation Sans',sans-serif;line-height:20px;color:#000;transform:scaleX(0.9693);transform-origin:0 0;">Добавить </span>
<span style="left:741.32px;top:211.00px;font:400 12px 'Liberation Sans',sans-serif;line-height:20px;color:#000;transform:scaleX(0.9417);transform-origin:0 0;">фото </span>
<span style="left:772.21px;top:211.00px;font:400 12px 'Liberation Sans',sans-serif;line-height:20px;color:#000;transform:scaleX(0.9452);transform-origin:0 0;">детали</span>
<div style="left:473px;top:214px;width:1px;height:15px;background:#bdbdbd;"></div>
<div style="left:474px;top:214px;width:1px;height:15px;background:#fff;"></div>
<div style="left:536px;top:214px;width:1px;height:15px;background:#bdbdbd;"></div>
<div style="left:537px;top:214px;width:1px;height:15px;background:#fff;"></div>
<div style="left:324px;top:234px;width:656px;height:402px;background:#f0f0f0;border-style:solid;border-color:#8db2e3 #9dbde9;border-width:1px 2px 1px 2px;"></div>
<div style="left:326px;top:235px;width:652px;height:258px;background:#ababab;border-style:solid;border-width:1px;border-color:#a0a0a0 #fff #fff #a0a0a0;"></div>
<div style="left:327px;top:236px;width:650px;height:256px;background:#ababab;border-style:solid;border-width:1px;border-color:#696969 #e3e3e3 #e3e3e3 #696969;"></div>
<div style="left:328px;top:237px;width:648px;height:72px;background:#fff;"></div>
<div style="left:328px;top:237px;width:647px;height:17px;background:linear-gradient(#fff,#fff 42%,#f3f4f6 47%,#f4f5f7 88%,#e9eaec);"></div>
<div style="left:328px;top:254px;width:647px;height:1px;background:#d5d5d5;"></div>
<div style="left:575px;top:237px;width:1px;height:17px;background:#e3e4e6;"></div>
<div style="left:576px;top:237px;width:1px;height:17px;background:#fff;"></div>
<div style="left:754px;top:237px;width:1px;height:17px;background:#e3e4e6;"></div>
<div style="left:755px;top:237px;width:1px;height:17px;background:#fff;"></div>
<div style="left:844px;top:237px;width:1px;height:17px;background:#e3e4e6;"></div>
<div style="left:845px;top:237px;width:1px;height:17px;background:#fff;"></div>
<div style="left:922px;top:237px;width:1px;height:17px;background:#e3e4e6;"></div>
<div style="left:923px;top:237px;width:1px;height:17px;background:#fff;"></div>
<span style="left:331.32px;top:235.50px;font:400 11px 'DejaVu Sans Condensed','Liberation Sans',sans-serif;line-height:20px;color:#000;transform:scaleX(0.9810);transform-origin:0 0;">Название</span>
<span style="left:579.13px;top:235.50px;font:400 11px 'DejaVu Sans Condensed','Liberation Sans',sans-serif;line-height:20px;color:#000;transform:scaleX(0.9744);transform-origin:0 0;">Примечание</span>
<span style="left:758.12px;top:235.50px;font:400 11px 'DejaVu Sans Condensed','Liberation Sans',sans-serif;line-height:20px;color:#000;transform:scaleX(0.9781);transform-origin:0 0;">Цена Вх.</span>
<span style="left:848.10px;top:235.50px;font:400 11px 'DejaVu Sans Condensed','Liberation Sans',sans-serif;line-height:20px;color:#000;">Цена Рек.</span>
<div style="left:328px;top:255px;width:647px;height:54px;background:#fff;"></div>
<div style="left:328px;top:255px;width:647px;height:17px;background:#3399ff;"></div>
<div style="left:576px;top:255px;width:178px;height:17px;background:#fff;border:1px dotted #000;"></div>
<div style="left:575px;top:255px;width:1px;height:54px;background:#f0f0f0;"></div>
<div style="left:754px;top:255px;width:1px;height:54px;background:#f0f0f0;"></div>
<div style="left:844px;top:255px;width:1px;height:54px;background:#f0f0f0;"></div>
<div style="left:922px;top:255px;width:1px;height:54px;background:#f0f0f0;"></div>
<div style="left:328px;top:272px;width:648px;height:1px;background:#f0f0f0;"></div>
<div style="left:328px;top:290px;width:648px;height:1px;background:#f0f0f0;"></div>
<div style="left:328px;top:308px;width:648px;height:1px;background:#f0f0f0;"></div>
<div style="left:328px;top:309px;width:648px;height:1px;background:#6b6b6b;"></div>
<div style="left:330px;top:259px;width:9px;height:9px;background:linear-gradient(#fff,#d8d8d8);border:1px solid #919191;"></div>
<div style="left:332px;top:263px;width:5px;height:1px;background:#2a4c9c;"></div>
<svg style="left:334px;top:268px" width="13" height="34" viewBox="0 0 13 34"><path d="M0.5 1 V32.5 M1 14.5 H12 M1 32.5 H12" stroke="#808080" stroke-width="1" stroke-dasharray="1 1" fill="none"/></svg>
<span style="left:343.50px;top:254.00px;font:400 11px 'DejaVu Sans Condensed','Liberation Sans',sans-serif;line-height:20px;color:#fff;">Капот</span>
<span style="left:357.40px;top:272.00px;font:400 11px 'DejaVu Sans Condensed','Liberation Sans',sans-serif;line-height:20px;color:#000;">Петля L</span>
<span style="left:357.40px;top:290.00px;font:400 11px 'DejaVu Sans Condensed','Liberation Sans',sans-serif;line-height:20px;color:#000;">Петля R</span>
<span style="left:835.15px;top:254.00px;font:400 11px 'DejaVu Sans Condensed','Liberation Sans',sans-serif;line-height:20px;color:#fff;transform:scaleX(0.9550);transform-origin:0 0;">0</span>
<span style="left:895.00px;top:254.00px;font:400 11px 'DejaVu Sans Condensed','Liberation Sans',sans-serif;line-height:20px;color:#fff;transform:scaleX(0.9550);transform-origin:0 0;">7000</span>
<span style="left:835.15px;top:272.00px;font:400 11px 'DejaVu Sans Condensed','Liberation Sans',sans-serif;line-height:20px;color:#000;transform:scaleX(0.9550);transform-origin:0 0;">0</span>
<span style="left:901.14px;top:272.00px;font:400 11px 'DejaVu Sans Condensed','Liberation Sans',sans-serif;line-height:20px;color:#000;transform:scaleX(0.9550);transform-origin:0 0;">500</span>
<span style="left:835.15px;top:290.00px;font:400 11px 'DejaVu Sans Condensed','Liberation Sans',sans-serif;line-height:20px;color:#000;transform:scaleX(0.9550);transform-origin:0 0;">0</span>
<span style="left:901.14px;top:290.00px;font:400 11px 'DejaVu Sans Condensed','Liberation Sans',sans-serif;line-height:20px;color:#000;transform:scaleX(0.9550);transform-origin:0 0;">500</span>
<div style="left:924px;top:257px;width:13px;height:13px;background:#f4f4f4;border:1px solid #8e8f8f;"></div>
<div style="left:926px;top:259px;width:9px;height:9px;background:linear-gradient(135deg,#d3d6da,#f6f6f6);border:1px solid #b0b4b9;"></div>
<svg style="left:924px;top:257px" width="13" height="13" viewBox="0 0 13 13"><path d="M3 6.5 L5.5 10 L10 2.8" fill="none" stroke="#3a4a9a" stroke-width="1.8"/></svg>
<div style="left:924px;top:275px;width:13px;height:13px;background:#f4f4f4;border:1px solid #8e8f8f;"></div>
<div style="left:926px;top:277px;width:9px;height:9px;background:linear-gradient(135deg,#5fc0e8,#1f77b0 60%,#175f96);border:1px solid #1c4f7a;"></div>
<div style="left:924px;top:293px;width:13px;height:13px;background:#f4f4f4;border:1px solid #8e8f8f;"></div>
<div style="left:926px;top:295px;width:9px;height:9px;background:linear-gradient(135deg,#5fc0e8,#1f77b0 60%,#175f96);border:1px solid #1c4f7a;"></div>
<div style="left:326px;top:493px;width:652px;height:142px;background:#f0f0f0;"></div>
<div style="left:327px;top:500px;width:650px;height:134px;border:1px solid #d5dfe5;border-radius:3px;background:#f0f0f0;box-shadow:1px 1px 0 #fff;"></div>
<div style="left:333px;top:495px;width:116px;height:12px;background:#f0f0f0;"></div>
<span style="left:334.06px;top:491.00px;font:400 11px 'DejaVu Sans Condensed','Liberation Sans',sans-serif;line-height:20px;color:#000;transform:scaleX(0.9384);transform-origin:0 0;">Информация о машине</span>
<div style="left:329px;top:510px;width:645px;height:122px;background:#fff;"></div>
<span style="left:342.14px;top:516.00px;font:400 11px 'DejaVu Sans','Liberation Sans',sans-serif;line-height:20px;color:#000;transform:scaleX(1.0083);transform-origin:0 0;">Автомобиль:</span>
<span style="left:439.90px;top:516.00px;font:400 11px 'DejaVu Sans','Liberation Sans',sans-serif;line-height:20px;color:#000;transform:scaleX(1.0568);transform-origin:0 0;">TOYOTA SURF RZN185 - 033-45-115</span>
<span style="left:342.14px;top:533.00px;font:400 11px 'DejaVu Sans','Liberation Sans',sans-serif;line-height:20px;color:#000;transform:scaleX(1.0934);transform-origin:0 0;">№ кузова:</span>
<span style="left:439.90px;top:533.00px;font:400 11px 'DejaVu Sans','Liberation Sans',sans-serif;line-height:20px;color:#000;transform:scaleX(1.0199);transform-origin:0 0;">VZN185-9012431</span>
<span style="left:342.14px;top:550.00px;font:400 11px 'DejaVu Sans','Liberation Sans',sans-serif;line-height:20px;color:#000;transform:scaleX(0.9953);transform-origin:0 0;">Двигатель:</span>
<span style="left:439.90px;top:550.00px;font:400 11px 'DejaVu Sans','Liberation Sans',sans-serif;line-height:20px;color:#000;transform:scaleX(1.0505);transform-origin:0 0;">5VZ</span>
<span style="left:342.14px;top:567.00px;font:400 11px 'DejaVu Sans','Liberation Sans',sans-serif;line-height:20px;color:#000;transform:scaleX(1.0320);transform-origin:0 0;">№ двигателя:</span>
<span style="left:439.90px;top:567.00px;font:400 11px 'DejaVu Sans','Liberation Sans',sans-serif;line-height:20px;color:#000;transform:scaleX(1.0027);transform-origin:0 0;">0562978</span>
<span style="left:342.14px;top:584.00px;font:400 11px 'DejaVu Sans','Liberation Sans',sans-serif;line-height:20px;color:#000;transform:scaleX(1.0075);transform-origin:0 0;">Трансмиссия:</span>
<span style="left:439.90px;top:584.00px;font:400 11px 'DejaVu Sans','Liberation Sans',sans-serif;line-height:20px;color:#000;transform:scaleX(1.0902);transform-origin:0 0;">AT</span>
<span style="left:342.14px;top:601.00px;font:400 11px 'DejaVu Sans','Liberation Sans',sans-serif;line-height:20px;color:#000;transform:scaleX(1.0507);transform-origin:0 0;">Год выпуска:</span>
<span style="left:439.90px;top:601.00px;font:400 11px 'DejaVu Sans','Liberation Sans',sans-serif;line-height:20px;color:#000;transform:scaleX(1.0218);transform-origin:0 0;">97</span>
<span style="left:342.14px;top:618.00px;font:400 11px 'DejaVu Sans','Liberation Sans',sans-serif;line-height:20px;color:#000;transform:scaleX(1.0173);transform-origin:0 0;">Пробег:</span>
<span style="left:439.90px;top:618.00px;font:400 11px 'DejaVu Sans','Liberation Sans',sans-serif;line-height:20px;color:#000;transform:scaleX(1.0097);transform-origin:0 0;">78</span>
<span style="left:681.03px;top:516.00px;font:400 11px 'DejaVu Sans','Liberation Sans',sans-serif;line-height:20px;color:#000;transform:scaleX(1.0062);transform-origin:0 0;">Примечание к машине:</span>
<div style="left:959px;top:510px;width:15px;height:122px;background:linear-gradient(to right,#f4f4f4,#eeeeee 50%,#f1f1f1);"></div>
<svg style="left:964px;top:517px" width="7" height="4" viewBox="0 0 7 4"><path d="M0 4 L3.5 0 L7 4 Z" fill="#454545"/></svg>
<svg style="left:964px;top:622px" width="7" height="4" viewBox="0 0 7 4"><path d="M0 0 L7 0 L3.5 4 Z" fill="#454545"/></svg>
<div style="left:959px;top:528px;width:15px;height:74px;background:linear-gradient(to right,#f5f5f5,#e3e3e3 50%,#cfcfcf);border:1px solid #979797;border-radius:2px;"></div>
<div style="left:963px;top:561px;width:7px;height:1px;background:#6f6f6f;"></div>
<div style="left:963px;top:562px;width:7px;height:1px;background:#fff;"></div>
<div style="left:963px;top:564px;width:7px;height:1px;background:#6f6f6f;"></div>
<div style="left:963px;top:565px;width:7px;height:1px;background:#fff;"></div>
<div style="left:963px;top:567px;width:7px;height:1px;background:#6f6f6f;"></div>
<div style="left:963px;top:568px;width:7px;height:1px;background:#fff;"></div>
<div style="left:324px;top:636px;width:656px;height:25px;background:#bfdbff;"></div>
<div style="left:330px;top:636px;width:50px;height:22px;background:linear-gradient(#f4f8fe,#dbe6f6 50%,#d0def2);border:1px solid #8db2e3;border-top:none;border-radius:0 0 5px 5px;"></div>
<span style="left:338.13px;top:638.00px;font:700 11px 'DejaVu Sans','Liberation Sans',sans-serif;line-height:20px;color:#000;transform:scaleX(0.9585);transform-origin:0 0;">Инфо</span>
<span style="left:393.41px;top:638.00px;font:400 11px 'DejaVu Sans Condensed','Liberation Sans',sans-serif;line-height:20px;color:#000;transform:scaleX(0.9873);transform-origin:0 0;">Инфо о плане</span>
</body></html>
